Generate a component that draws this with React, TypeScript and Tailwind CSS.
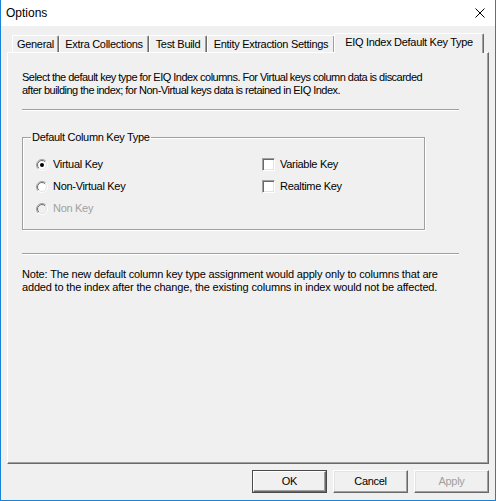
import React from "react";

const font = { fontFamily: '"Liberation Sans", Arial, sans-serif' };

function Radio({ checked, disabled }: { checked?: boolean; disabled?: boolean }) {
  return (
    <svg width="12" height="12" viewBox="0 0 12 12" className="shrink-0">
      <defs>
        <linearGradient id="rOuter" x1="0" y1="0" x2="1" y2="1">
          <stop offset="0.5" stopColor="#a0a0a0" />
          <stop offset="0.5" stopColor="#ffffff" />
        </linearGradient>
        <linearGradient id="rInner" x1="0" y1="0" x2="1" y2="1">
          <stop offset="0.5" stopColor="#696969" />
          <stop offset="0.5" stopColor="#e3e3e3" />
        </linearGradient>
      </defs>
      <circle cx="6" cy="6" r="5.5" fill="none" stroke="url(#rOuter)" strokeWidth="1" />
      <circle cx="6" cy="6" r="4.5" fill={disabled ? "#f0f0f0" : "#ffffff"} stroke="url(#rInner)" strokeWidth="1" />
      {checked && <circle cx="6" cy="6" r="2" fill="#000" />}
    </svg>
  );
}

function Checkbox() {
  return (
    <div className="w-[13px] h-[13px] shrink-0 bg-white border-t border-l border-t-[#a0a0a0] border-l-[#a0a0a0] border-r border-b border-r-white border-b-white shadow-[inset_1px_1px_0_#696969,inset_-1px_-1px_0_#e3e3e3]" />
  );
}

function Tab({ label, w }: { label: string; w: string }) {
  return (
    <div
      className={`${w} h-[17px] shrink-0 flex items-center justify-center whitespace-nowrap text-[11px] text-black bg-[#f0f0f0] border-t border-l border-white border-r border-r-[#696969] rounded-t-[2px] shadow-[inset_-1px_0_0_#a0a0a0]`}
    >
      {label}
    </div>
  );
}

function Button({ label, def, disabled }: { label: string; def?: boolean; disabled?: boolean }) {
  if (def) {
    return (
      <div className="w-[75px] h-[23px] border border-[#4a4a4a] flex">
        <div className="flex-1 flex items-center justify-center text-[11px] text-black border-t border-l border-white border-r border-b border-r-[#696969] border-b-[#696969] shadow-[inset_-1px_-1px_0_#a0a0a0]">
          {label}
        </div>
      </div>
    );
  }
  return (
    <div
      className={`w-[75px] h-[23px] flex items-center justify-center text-[11px] border-t border-l border-white border-r border-b border-r-[#696969] border-b-[#696969] shadow-[inset_-1px_-1px_0_#a0a0a0,inset_1px_1px_0_#e3e3e3] ${disabled ? "text-[#a0a0a0]" : "text-black"}`}
    >
      {label}
    </div>
  );
}

export default function App() {
  return (
    <div className="w-[496px] h-[501px] flex flex-col bg-[#f0f0f0] text-black select-none tracking-[-0.3px]" style={font}>
      {/* title bar */}
      <div className="h-[26px] bg-white flex items-center justify-between pl-[5px] pr-[10px] border-x border-[#1883d7] tracking-normal">
        <span className="text-[12px]">Options</span>
        <svg width="10" height="10" viewBox="0 0 10 10">
          <path d="M0.5 0.5 L9.5 9.5 M9.5 0.5 L0.5 9.5" stroke="#000" strokeWidth="1" />
        </svg>
      </div>

      {/* body */}
      <div className="flex-1 flex flex-col border-x border-b border-[#1883d7] px-[6px]">
        {/* tab strip */}
        <div className="h-[26px] pt-[7px] flex items-end pl-[5px]">
          <Tab label="General" w="w-[47px]" />
          <Tab label="Extra Collections" w="w-[90px]" />
          <Tab label="Test Build" w="w-[58px]" />
          <Tab label="Entity Extraction Settings" w="w-[128px]" />
          <div className="w-[150px] h-[20px] -mb-px -ml-[1px] relative z-10 flex items-center justify-center pb-[2px] whitespace-nowrap text-[11px] bg-[#f0f0f0] border-t border-l border-white border-r border-r-[#696969] rounded-t-[2px] shadow-[inset_-1px_0_0_#a0a0a0]">
            EIQ Index Default Key Type
          </div>
        </div>

        {/* panel */}
        <div className="h-[412px] flex flex-col border-t border-l border-white border-r border-b border-r-[#696969] border-b-[#696969] shadow-[inset_-1px_-1px_0_#a0a0a0] pt-[18px] pl-[14px] pr-[29px] text-[11px] leading-[13px]">
          <p className="whitespace-nowrap tracking-[-0.52px]">
            Select the default key type for EIQ Index columns. For Virtual keys column data is discarded
            <br />
            after building the index; for Non-Virtual keys data is retained in EIQ Index.
          </p>

          <div className="mt-[12px] h-[2px] border-t border-[#a0a0a0] border-b border-b-white" />

          {/* group box */}
          <div className="mt-[26px] w-[403px] h-[93px] relative border border-[#a0a0a0] shadow-[1px_1px_0_#fff,inset_1px_1px_0_#fff] pt-[20px] pl-[13px]">
            <span className="absolute -top-[7px] left-[8px] px-[1px] bg-[#f0f0f0]">Default Column Key Type</span>
            <div className="flex">
              <div className="w-[226px] flex flex-col gap-[9px]">
                <div className="flex items-center gap-[5px] h-[13px]">
                  <Radio checked />
                  <span>Virtual Key</span>
                </div>
                <div className="flex items-center gap-[5px] h-[13px]">
                  <Radio />
                  <span>Non-Virtual Key</span>
                </div>
                <div className="flex items-center gap-[5px] h-[13px] text-[#a0a0a0]">
                  <Radio disabled />
                  <span>Non Key</span>
                </div>
              </div>
              <div className="flex flex-col gap-[9px]">
                <div className="flex items-center gap-[5px] h-[13px]">
                  <Checkbox />
                  <span>Variable Key</span>
                </div>
                <div className="flex items-center gap-[5px] h-[13px]">
                  <Checkbox />
                  <span>Realtime Key</span>
                </div>
              </div>
            </div>
          </div>

          <div className="mt-[23px] h-[2px] border-t border-[#a0a0a0] border-b border-b-white" />

          <p className="mt-[13px] whitespace-nowrap tracking-[-0.17px]">
            Note: The new default column key type assignment would apply only to columns that are
            <br />
            added to the index after the change, the existing columns in index would not be affected.
          </p>
        </div>

        {/* buttons */}
        <div className="mt-[6px] flex justify-end gap-[6px]">
          <Button label="OK" def />
          <Button label="Cancel" />
          <Button label="Apply" disabled />
        </div>
      </div>
    </div>
  );
}
